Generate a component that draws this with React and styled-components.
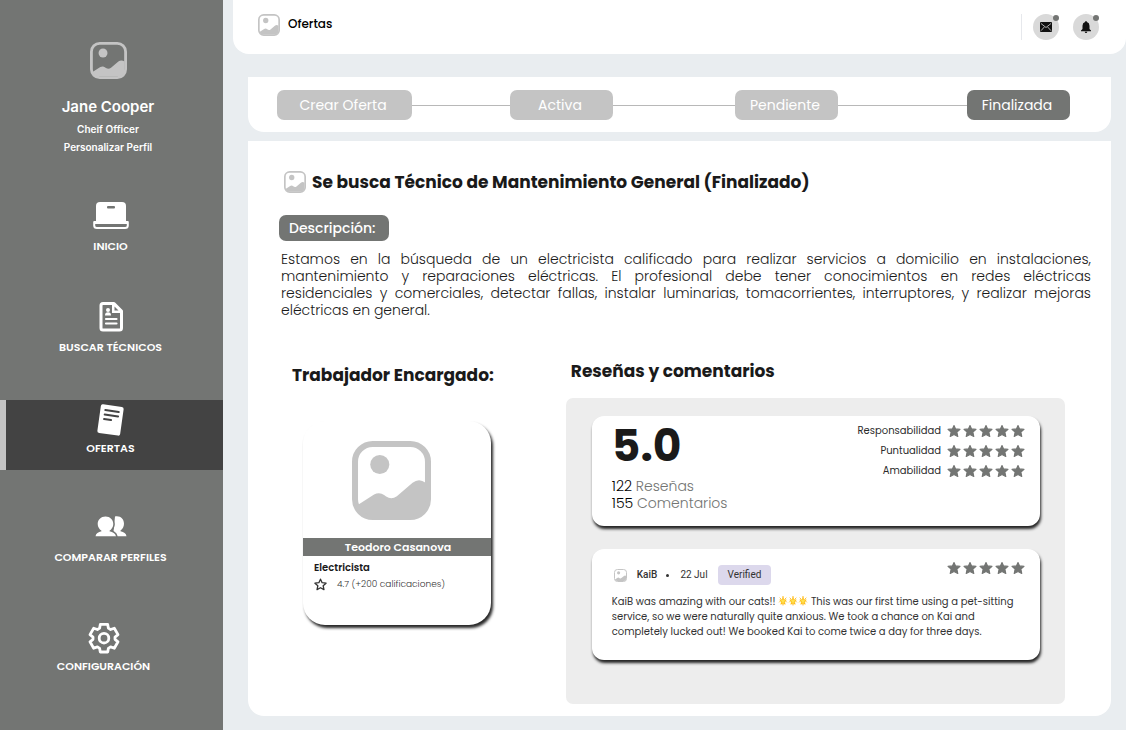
import React from "react";
import styled, { createGlobalStyle } from "styled-components";

const GlobalStyle = createGlobalStyle`
  *, *::before, *::after { box-sizing: border-box; }
  body {
    margin: 0;
    background: #e9edf0;
    color: #1a1a1a;
    font-family: Poppins, Inter, "Noto Sans", sans-serif;
  }
  button { font: inherit; border: 0; cursor: pointer; }
  h1, h2, p, ul, ol, dl, dd { margin: 0; padding: 0; }
  ul, ol { list-style: none; }
  svg { display: block; flex: none; }
`;

const Page = styled.div`
  display: flex;
  min-height: 100vh;
`;

/* ---------- Sidebar ---------- */

const Sidebar = styled.aside`
  flex: none;
  width: 223px;
  background: #737573;
  color: #fff;
`;

const Profile = styled.div`
  display: flex;
  flex-direction: column;
  align-items: center;
  height: 198px;
  padding: 42px 7px 0 0;
  font-family: Inter, sans-serif;
  font-weight: 600;
`;

const ProfileName = styled.p`
  margin-top: 16px;
  font-size: 15px;
  line-height: 24px;
`;

const ProfileLine = styled.p`
  font-size: 10px;
  line-height: 18px;
  margin-top: ${(p) => (p.$first ? "1px" : "0")};
`;

const ProfileLink = styled.a`
  color: inherit;
  text-decoration: none;
`;

const NavList = styled.ul`
  display: flex;
  flex-direction: column;
  gap: ${(p) => p.$gap};
  & + & { margin-top: ${(p) => p.$gap}; }
`;

const NavLink = styled.a`
  display: flex;
  flex-direction: column;
  align-items: center;
  height: 70px;
  padding-right: ${(p) => (p.$inset ? "16px" : "2px")};
  background: ${(p) => (p.$active ? "#434343" : "transparent")};
  box-shadow: ${(p) => (p.$active ? "inset 6px 0 0 #c4c4c4" : "none")};
  color: #fff;
  text-decoration: none;
  font-size: 11px;
  font-weight: 600;
  line-height: 16px;
`;

/* ---------- Header ---------- */

const Main = styled.div`
  flex: 1;
  min-width: 0;
  display: flex;
  flex-direction: column;
`;

const Header = styled.header`
  display: flex;
  align-items: center;
  justify-content: space-between;
  height: 54px;
  margin-left: 10px;
  padding: 0 27px 0 25px;
  background: #fff;
  border-radius: 0 0 16px 16px;
`;

const Brand = styled.div`
  display: flex;
  align-items: flex-start;
  gap: 8px;
  padding-bottom: 4px;
`;

const HeaderTitle = styled.p`
  color: #000;
  font-size: 12px;
  font-weight: 500;
  line-height: 20px;
`;

const HeaderActions = styled.div`
  display: flex;
  gap: 14px;
  padding-left: 11px;
  border-left: 1px solid #e6e8ec;
`;

const RoundButton = styled.button`
  position: relative;
  display: grid;
  place-items: center;
  width: 26px;
  height: 26px;
  padding: 0;
  border-radius: 50%;
  background: #d9d9d9;
  &::after {
    content: "";
    position: absolute;
    top: 1px;
    right: 0;
    width: 6px;
    height: 6px;
    border-radius: 50%;
    background: #737573;
  }
`;

/* ---------- Steps ---------- */

const Steps = styled.ol`
  display: flex;
  align-items: center;
  margin: 23px 15px 0 25px;
  padding: 13px 41px 12px 29px;
  background: #fff;
  border-radius: 0 0 16px 16px;
`;

const StepItem = styled.li`
  display: flex;
  align-items: center;
  flex: ${(p) => p.$grow} 0 auto;
  &:not(:last-child)::after {
    content: "";
    flex: 1;
    height: 1px;
    background: #b8b8b8;
  }
`;

const StepButton = styled.button`
  width: ${(p) => (p.$wide ? "135px" : "103px")};
  height: 30px;
  padding: 0 3px 0 0;
  border-radius: 7px;
  background: ${(p) => (p.$current ? "#737573" : "#c4c4c4")};
  color: #fff;
  font-size: 14px;
  font-weight: 400;
`;

/* ---------- Offer ---------- */

const Offer = styled.main`
  flex: 1;
  margin: 9px 15px 14px 25px;
  padding: 29px 20px 11px 33px;
  background: #fff;
  border-radius: 0 0 16px 16px;
`;

const OfferHeading = styled.div`
  display: flex;
  align-items: center;
  gap: 6px;
  padding-left: 3px;
`;

const Title = styled.h1`
  font-size: 17px;
  font-weight: 700;
  line-height: 24px;
`;

const Tag = styled.h2`
  width: fit-content;
  margin: 21px 0 0 -2px;
  padding: 0 13px 0 10px;
  border-radius: 7px;
  background: #737573;
  color: #fff;
  font-size: 14px;
  font-weight: 500;
  line-height: 26px;
`;

const Description = styled.p`
  margin-top: 10px;
  font-size: 14px;
  font-weight: 300;
  line-height: 17px;
  text-align: justify;
`;

const Columns = styled.div`
  display: flex;
  gap: 72px;
  margin-top: 40px;
  padding: 0 26px 0 11px;
`;

const WorkerColumn = styled.section`
  flex: none;
  padding-top: 4px;
`;

const ReviewsColumn = styled.section`
  flex: 1;
  min-width: 0;
`;

const SectionTitle = styled.h2`
  font-size: 17px;
  font-weight: 700;
  line-height: 24px;
  padding-left: ${(p) => (p.$indent ? "5px" : "0")};
`;

const WorkerCard = styled.article`
  width: 188px;
  height: 204px;
  margin: 34px 0 0 11px;
  border-radius: 22px;
  background: #fff;
  box-shadow: 2px 3px 3px rgba(0, 0, 0, 0.85);
`;

const WorkerPhoto = styled.div`
  display: flex;
  justify-content: center;
  padding: 20px 11px 18px 0;
`;

const WorkerName = styled.p`
  padding-left: 2px;
  background: #737573;
  color: #fff;
  font-size: 11px;
  font-weight: 600;
  line-height: 18px;
  text-align: center;
`;

const WorkerInfo = styled.div`
  padding: 4px 11px;
  font-size: 10px;
  font-weight: 600;
  line-height: 16px;
`;

const WorkerRating = styled.p`
  display: flex;
  align-items: center;
  gap: 10px;
  color: #333;
  font-size: 9px;
  font-weight: 300;
`;

/* ---------- Reviews ---------- */

const ReviewsPanel = styled.div`
  display: flex;
  flex-direction: column;
  gap: 23px;
  margin-top: 15px;
  padding: 18px 25px 44px 26px;
  border-radius: 7px;
  background: #ededed;
`;

const ReviewCard = styled.article`
  min-height: ${(p) => p.$height};
  padding: 4px 15px 0 20px;
  border-radius: 12px;
  background: #fff;
  box-shadow: 1px 3px 3px rgba(0, 0, 0, 0.85);
`;

const Spread = styled.div`
  display: flex;
  justify-content: space-between;
`;

const Score = styled.p`
  font-size: 44px;
  font-weight: 700;
  line-height: 52px;
`;

const Totals = styled.p`
  margin-top: ${(p) => (p.$first ? "6px" : "0")};
  color: #000;
  font-size: 14px;
  font-weight: 300;
  line-height: 17px;
`;

const Muted = styled.span`
  color: #737573;
`;

const Ratings = styled.dl`
  display: grid;
  align-content: start;
  gap: 4px;
  padding-top: 3px;
`;

const RatingRow = styled.div`
  display: flex;
  justify-content: flex-end;
  align-items: center;
  gap: 6px;
  font-size: 10px;
  line-height: 16px;
  color: #2b2b2b;
`;

const StarRow = styled.div`
  display: flex;
  gap: 2px;
`;

const Byline = styled.div`
  display: flex;
  align-items: center;
  padding: 12px 0 0 2px;
  color: #333;
  font-family: Roboto, sans-serif;
  font-size: 10px;
  line-height: 20px;
`;

const Author = styled.span`
  margin-left: 10px;
  font-weight: 500;
`;

const Dot = styled.span`
  width: 3px;
  height: 3px;
  margin: 0 11px 0 9px;
  border-radius: 50%;
  background: #333;
`;

const Verified = styled.span`
  margin-left: 10px;
  padding: 0 10px;
  border-radius: 4px;
  background: #dcd8ec;
`;

const CardStars = styled.div`
  padding-top: 8px;
`;

const Comment = styled.p`
  margin-top: 9px;
  color: #333;
  font-size: 10px;
  line-height: 15px;
`;

const InlineIcon = styled.span`
  display: inline-flex;
  vertical-align: -1px;
`;

/* ---------- Icons ---------- */

const Placeholder = ({ size }) => (
  <svg width={size} height={size} viewBox="0 0 236 236" aria-hidden="true">
    <rect x="9" y="9" width="218" height="218" rx="53" fill="none" stroke="#c4c4c4" strokeWidth="18" />
    <circle cx="83" cy="70" r="28.5" fill="#c4c4c4" />
    <path
      d="M16 192 66 160Q82 151 97 162L102 166Q118 177 134 165L181 125Q200 110 220 125V176Q220 220 176 220H60Q16 220 16 176Z"
      fill="#c4c4c4"
    />
  </svg>
);

const Stars = () => (
  <StarRow role="img" aria-label="5 de 5 estrellas">
    {[0, 1, 2, 3, 4].map((n) => (
      <svg key={n} width="14" height="14" viewBox="0 0 28 28">
        <path
          d="M14 3 17.200 9.800 26 10.800 19.800 16.400 21.600 25 14 21 6.400 25 8.200 16.400 2 10.800 10.800 9.800Z"
          fill="#737573"
          stroke="#737573"
          strokeWidth="2.200"
          strokeLinejoin="round"
        />
      </svg>
    ))}
  </StarRow>
);

const OutlineStar = () => (
  <svg width="13" height="13" viewBox="0 0 24 24" aria-hidden="true">
    <path
      d="M12 2.2 15 8.7 22.3 9.5 16.9 14.3 18.4 21.5 12 17.9 5.6 21.5 7.1 14.3 1.7 9.5 9 8.7Z"
      fill="none"
      stroke="#333"
      strokeWidth="2.4"
      strokeLinejoin="round"
    />
  </svg>
);

const GlowingStar = () => (
  <svg width="10" height="10" viewBox="0 0 20 20">
    <path
      d="M10 1V3M4 4 5 5M16 4 15 5M3 12 4 11M17 12 16 11M10 18V16"
      stroke="#ffb300"
      strokeWidth="2"
      strokeLinecap="round"
    />
    <path d="M10 2 12.300 6.500 17.500 7.500 14 11.500 15 17.500 10 15 5 17.500 6 11.500 2.500 7.500 7.700 6.500Z" fill="#ffb914" />
    <path d="M10 5 11.600 8.200 15 8.700 12.500 11 13.200 14.500 10 12.800 6.800 14.500 7.500 11 5 8.700 8.400 8.200Z" fill="#ffe24d" />
  </svg>
);

const LaptopIcon = () => (
  <svg width="36" height="40" viewBox="0 2 36 40" aria-hidden="true">
    <path d="M3 25V10q0-4 4-4h22q4 0 4 4v15z" fill="#fff" />
    <rect x="14" y="10" width="8" height="2.500" rx="1" fill="#737573" />
    <path d="M1.200 26H34.800V29.500Q34.800 32 32 32H4Q1.200 32 1.200 29.500Z" fill="#737573" stroke="#fff" strokeWidth="2" strokeLinejoin="round" />
    <path d="M1 25H35V28H1Z" fill="#fff" />
  </svg>
);

const ResumeIcon = () => (
  <svg width="24" height="40" viewBox="0 1 24 40" aria-hidden="true">
    <path d="M4 5.500H15L22.500 13V30Q22.500 32 20.500 32H4Q2 32 2 30V7.500Q2 5.500 4 5.500Z" fill="none" stroke="#fff" strokeWidth="3" strokeLinejoin="round" />
    <path d="M13 5H15L23 13V15H13Z" fill="#fff" />
    <path d="M15.500 8.500V12.500H19.500Z" fill="#737573" />
    <circle cx="9" cy="12" r="2" fill="#fff" />
    <path d="M6 17.500Q6 14.200 9 14.200T12 17.500Z" fill="#fff" />
    <path d="M7 21H17.500M7 25.500H17.500" stroke="#fff" strokeWidth="2.200" strokeLinecap="round" />
  </svg>
);

const OfferIcon = () => (
  <svg width="28" height="40" viewBox="0 0 28 40" aria-hidden="true">
    <g transform="rotate(8 14 20)">
      <rect x="2" y="5.500" width="23" height="29" rx="2" fill="#fff" />
      <path d="M7 11H20.500M7 15.500H20.500M7 20H14" stroke="#434343" strokeWidth="2" strokeLinecap="round" />
    </g>
  </svg>
);

const PeopleIcon = () => (
  <svg width="32" height="40" viewBox="0 0 32 40" aria-hidden="true">
    <g fill="#fff">
      <path d="M20 7.500C25.500 6.500 29 10 29 14.800C29 17.800 27.500 20 25.500 21.500V22.300C29 23 31 24.500 31.500 27.200H18Z" />
      <path
        d="M10.500 7.500C15 7.500 18.300 10.800 18.300 15C18.300 17.800 16.800 20.300 14.500 21.700V22.300C18 23 20.300 24.500 21 27.200H.5C1 24.500 3.200 23 6.500 22.300V21.700C4.200 20.300 2.700 17.800 2.700 15C2.700 10.800 6 7.500 10.500 7.500Z"
        stroke="#737573"
        strokeWidth="3"
        paintOrder="stroke"
      />
    </g>
  </svg>
);

const GearIcon = () => (
  <svg width="32" height="40" viewBox="0 1 32 40" aria-hidden="true">
    <g fill="none" stroke="#fff" strokeWidth="2.8" strokeLinejoin="round">
      <path d="M12.300 7.400H19.700L20.400 11.200Q21.500 11.700 22.600 12.500L26.300 11.200 30 17.600 27 20.100V22.300L30 24.800 26.300 31.200 22.600 29.900Q21.500 30.700 20.400 31.200L19.700 35H12.300L11.600 31.200Q10.500 30.700 9.400 29.900L5.700 31.200 2 24.800 5 22.300V20.100L2 17.600 5.700 11.200 9.400 12.500Q10.500 11.700 11.600 11.200Z" />
      <circle cx="16" cy="21.200" r="4.800" />
    </g>
  </svg>
);

const MailIcon = () => (
  <svg width="12" height="10" viewBox="0 0 12 10" aria-hidden="true">
    <rect width="12" height="10" rx="1" fill="#111" />
    <path d="M1 1.500 6 5.500 11 1.500M1 8.700 4.300 5M11 8.700 7.700 5" fill="none" stroke="#d9d9d9" strokeWidth=".8" />
  </svg>
);

const BellIcon = () => (
  <svg width="10" height="12" viewBox="0 0 10 12" aria-hidden="true">
    <path d="M5 0Q5.800 0 5.900 1Q8.500 1.800 8.500 4.800V8L10 9.600V10.200H0V9.600L1.500 8V4.800Q1.500 1.800 4.100 1Q4.200 0 5 0ZM3.700 10.700H6.300Q6.200 12 5 12T3.700 10.700Z" fill="#111" />
  </svg>
);

/* ---------- Data ---------- */

const navGroups = [
  {
    gap: "31px",
    items: [
      { label: "INICIO", Icon: LaptopIcon },
      { label: "BUSCAR TÉCNICOS", Icon: ResumeIcon },
      { label: "OFERTAS", Icon: OfferIcon, active: true },
    ],
  },
  {
    gap: "39px",
    items: [
      { label: "COMPARAR PERFILES", Icon: PeopleIcon },
      { label: "CONFIGURACIÓN", Icon: GearIcon, inset: true },
    ],
  },
];

const steps = [
  { label: "Crear Oferta", grow: 98, wide: true },
  { label: "Activa", grow: 122 },
  { label: "Pendiente", grow: 129 },
  { label: "Finalizada", grow: 0, current: true },
];

export default function App() {
  return (
    <Page>
      <GlobalStyle />
      <Sidebar>
        <Profile>
          <Placeholder size={37} />
          <ProfileName>Jane Cooper</ProfileName>
          <ProfileLine $first>Cheif Officer</ProfileLine>
          <ProfileLine>
            <ProfileLink href="#perfil">Personalizar Perfil</ProfileLink>
          </ProfileLine>
        </Profile>
        <nav>
          {navGroups.map((group) => (
            <NavList key={group.gap} $gap={group.gap}>
              {group.items.map(({ label, Icon, active, inset }) => (
                <li key={label}>
                  <NavLink href="#" $active={active} $inset={inset} aria-current={active ? "page" : undefined}>
                    <Icon />
                    {label}
                  </NavLink>
                </li>
              ))}
            </NavList>
          ))}
        </nav>
      </Sidebar>

      <Main>
        <Header>
          <Brand>
            <Placeholder size={22} />
            <HeaderTitle>Ofertas</HeaderTitle>
          </Brand>
          <HeaderActions>
            <RoundButton aria-label="Mensajes">
              <MailIcon />
            </RoundButton>
            <RoundButton aria-label="Notificaciones">
              <BellIcon />
            </RoundButton>
          </HeaderActions>
        </Header>

        <Steps>
          {steps.map((step) => (
            <StepItem key={step.label} $grow={step.grow}>
              <StepButton $wide={step.wide} $current={step.current}>
                {step.label}
              </StepButton>
            </StepItem>
          ))}
        </Steps>

        <Offer>
          <OfferHeading>
            <Placeholder size={22} />
            <Title>Se busca Técnico de Mantenimiento General (Finalizado)</Title>
          </OfferHeading>
          <Tag>Descripción:</Tag>
          <Description>
            Estamos en la búsqueda de un electricista calificado para realizar servicios a domicilio en instalaciones,
            mantenimiento y reparaciones eléctricas. El profesional debe tener conocimientos en redes eléctricas
            residenciales&nbsp;y&nbsp;comerciales, detectar fallas, instalar luminarias, tomacorrientes, interruptores,
            y realizar mejoras eléctricas&nbsp;en&nbsp;general.
          </Description>

          <Columns>
            <WorkerColumn>
              <SectionTitle>Trabajador Encargado:</SectionTitle>
              <WorkerCard>
                <WorkerPhoto>
                  <Placeholder size={79} />
                </WorkerPhoto>
                <WorkerName>Teodoro Casanova</WorkerName>
                <WorkerInfo>
                  <p>Electricista</p>
                  <WorkerRating>
                    <OutlineStar />
                    4.7 (+200 calificaciones)
                  </WorkerRating>
                </WorkerInfo>
              </WorkerCard>
            </WorkerColumn>

            <ReviewsColumn>
              <SectionTitle $indent>Reseñas y comentarios</SectionTitle>
              <ReviewsPanel>
                <ReviewCard $height="110px">
                  <Spread>
                    <div>
                      <Score>5.0</Score>
                      <Totals $first>
                        122 <Muted>Reseñas</Muted>
                      </Totals>
                      <Totals>
                        155 <Muted>Comentarios</Muted>
                      </Totals>
                    </div>
                    <Ratings>
                      {["Responsabilidad", "Puntualidad", "Amabilidad"].map((name) => (
                        <RatingRow key={name}>
                          <dt>{name}</dt>
                          <dd>
                            <Stars />
                          </dd>
                        </RatingRow>
                      ))}
                    </Ratings>
                  </Spread>
                </ReviewCard>

                <ReviewCard $height="111px">
                  <Spread>
                    <Byline>
                      <Placeholder size={13} />
                      <Author>KaiB</Author>
                      <Dot />
                      <span>22 Jul</span>
                      <Verified>Verified</Verified>
                    </Byline>
                    <CardStars>
                      <Stars />
                    </CardStars>
                  </Spread>
                  <Comment>
                    KaiB was amazing with our cats!!{" "}
                    <InlineIcon role="img" aria-label="estrellas">
                      <GlowingStar />
                      <GlowingStar />
                      <GlowingStar />
                    </InlineIcon>{" "}
                    This was our first time using a pet-sitting service, so we were naturally quite anxious. We took a
                    chance on Kai and completely lucked out! We booked Kai to come twice a day for three days.
                  </Comment>
                </ReviewCard>
              </ReviewsPanel>
            </ReviewsColumn>
          </Columns>
        </Offer>
      </Main>
    </Page>
  );
}
